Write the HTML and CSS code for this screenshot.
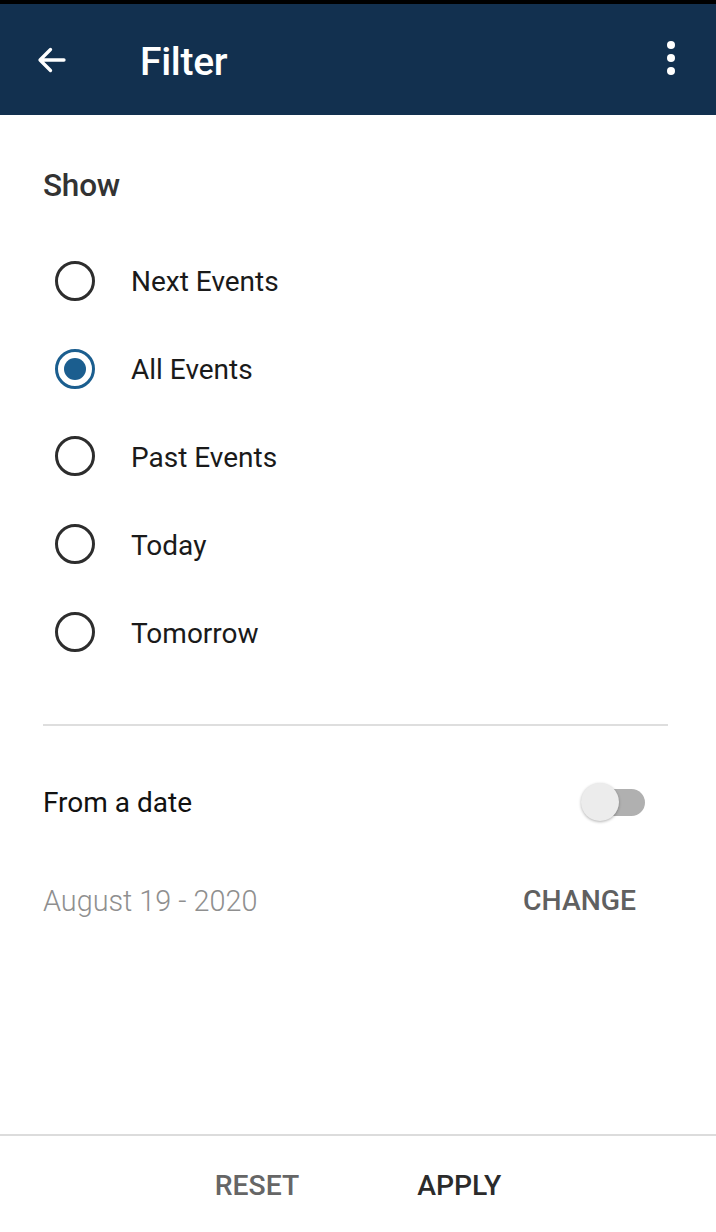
FILE: index.html
```html
<!DOCTYPE html>
<html>
<head>
<meta charset="utf-8">
<link rel="stylesheet" href="styles.css">
</head>
<body>
<div class="screen">
  <div class="statusbar"></div>
  <header class="appbar">
    <svg class="back" width="36" height="36" viewBox="0 0 24 24"><path d="M20 12H4.5M11 5l-7 7 7 7" fill="none" stroke="#fff" stroke-width="2.2" stroke-linecap="round" stroke-linejoin="round"/></svg>
    <h1 class="title">Filter</h1>
    <svg class="more" width="10" height="36" viewBox="0 0 10 36"><circle cx="5" cy="5" r="4" fill="#fff"/><circle cx="5" cy="18" r="4" fill="#fff"/><circle cx="5" cy="31" r="4" fill="#fff"/></svg>
  </header>
  <main class="content">
    <h2 class="section">Show</h2>
    <ul class="radios">
      <li class="radio"><span class="circle"></span><span class="label">Next Events</span></li>
      <li class="radio checked"><span class="circle"></span><span class="label">All Events</span></li>
      <li class="radio"><span class="circle"></span><span class="label">Past Events</span></li>
      <li class="radio"><span class="circle"></span><span class="label">Today</span></li>
      <li class="radio"><span class="circle"></span><span class="label">Tomorrow</span></li>
    </ul>
    <hr class="divider">
    <div class="row from">
      <span class="from-label">From a date</span>
      <span class="switch"><span class="track"></span><span class="thumb"></span></span>
    </div>
    <div class="row date">
      <span class="date-text">August 19 - 2020</span>
      <span class="change">CHANGE</span>
    </div>
  </main>
  <footer class="actions">
    <span class="btn reset">RESET</span>
    <span class="btn apply">APPLY</span>
  </footer>
</div>
</body>
</html>
```
FILE: styles.css
```css
* { box-sizing: border-box; }
html, body { margin: 0; padding: 0; background: #fff; }
body { font-family: Roboto, "Noto Sans", sans-serif; }
.screen { width: 716px; height: 1232px; display: flex; flex-direction: column; }
.statusbar { height: 4px; background: #000; }
.appbar { height: 111px; background: #12304f; display: flex; align-items: center; padding: 0 40px 0 34px; }
.back { margin-top: 0; }
.title { margin: 4px 0 0 70px; color: #fff; font-size: 39px; font-weight: 500; flex: 1; letter-spacing: -0.3px; }
.more { margin-top: -4px; }
.content { flex: 1; padding: 0 48px 0 43px; }
.section { margin: 52px 0 0 0; font-size: 31.5px; font-weight: 500; color: #333; line-height: 38px; letter-spacing: -0.2px; }
.radios { list-style: none; margin: 32px 0 0 0; padding: 0; }
.radio { height: 87.8px; display: flex; align-items: center; margin-left: 12px; }
.circle { width: 40px; height: 40px; border-radius: 50%; border: 3px solid #2d2d2d; position: relative; flex: none; }
.checked .circle { border-color: #1b5e8f; }
.checked .circle::after { content: ""; position: absolute; left: 6px; top: 6px; width: 22px; height: 22px; border-radius: 50%; background: #1b5e8f; }
.label { margin-left: 36px; font-size: 28px; color: #1a1a1a; margin-top: 2px; }
.divider { border: 0; border-top: 2px solid #dedede; margin: 48px 0 0 0; }
.row { display: flex; align-items: center; justify-content: space-between; }
.from { margin-top: 44px; height: 66px; }
.from-label { font-size: 28px; color: #111; }
.switch { position: relative; width: 66px; height: 40px; margin-right: 21px; margin-top: -2px; }
.track { position: absolute; left: 14px; top: 7px; width: 50px; height: 27px; border-radius: 14px; background: #b0b0b0; }
.thumb { position: absolute; left: 0; top: 1px; width: 38px; height: 38px; border-radius: 50%; background: #ececec; box-shadow: 0 1px 3px rgba(0,0,0,0.3); }
.date { margin-top: 32px; height: 66px; }
.date-text { font-size: 28.8px; font-weight: 300; color: #8f8f8f; }
.change { font-size: 28.3px; font-weight: 500; color: #606060; margin-right: 32px; }
.actions { height: 98px; border-top: 2px solid #dcdcdc; display: flex; align-items: center; justify-content: center; gap: 118px; padding-left: 0; }
.btn { font-size: 28.3px; font-weight: 500; margin-top: 2px; }
.reset { color: #666; }
.apply { color: #2b2b2b; }
```
